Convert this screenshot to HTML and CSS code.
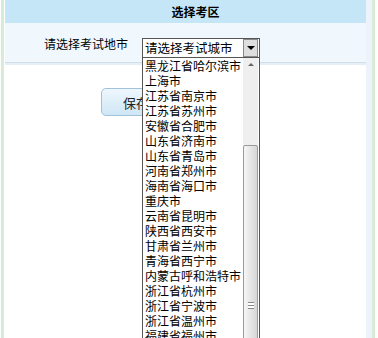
FILE: index.html
```html
<!DOCTYPE html>
<html lang="zh-CN">
<head>
    <meta charset="UTF-8">
    <title>选择考区</title>
    <link rel="stylesheet" href="styles.css">
</head>
<body>
    <div class="frame">
        <div class="main">
            <div class="title">选择考区</div>
            <div class="row">
                <span class="label">请选择考试地市</span>
                <div class="picker">
                    <div class="picker-box">
                        <span class="picker-text">请选择考试城市</span>
                        <span class="picker-btn"><span class="tri"></span></span>
                    </div>
                    <div class="dropdown">
                        <div class="options">
                            <div>黑龙江省哈尔滨市</div>
                            <div>上海市</div>
                            <div>江苏省南京市</div>
                            <div>江苏省苏州市</div>
                            <div>安徽省合肥市</div>
                            <div>山东省济南市</div>
                            <div>山东省青岛市</div>
                            <div>河南省郑州市</div>
                            <div>海南省海口市</div>
                            <div>重庆市</div>
                            <div>云南省昆明市</div>
                            <div>陕西省西安市</div>
                            <div>甘肃省兰州市</div>
                            <div>青海省西宁市</div>
                            <div>内蒙古呼和浩特市</div>
                            <div>浙江省杭州市</div>
                            <div>浙江省宁波市</div>
                            <div>浙江省温州市</div>
                            <div>福建省福州市</div>
                        </div>
                        <div class="scrollbar">
                            <div class="up"><span class="tri-up"></span></div>
                            <div class="thumb"><span class="grip"></span></div>
                        </div>
                    </div>
                </div>
            </div>
            <div class="actions">
                <button class="save-btn">保存</button>
            </div>
        </div>
        <div class="side"></div>
    </div>
</body>
</html>
```

FILE: styles.css
```css
body {
    margin: 0;
    background: #fff;
    font-family: "Noto Sans CJK SC", "Liberation Sans", sans-serif;
    font-size: 12px;
    color: #000;
}
.frame {
    display: flex;
    width: 374px;
    height: 338px;
    margin-left: 1px;
    border-left: 3px solid #d6ecd6;
    border-right: 3px solid #d6ecd6;
    box-sizing: border-box;
    overflow: hidden;
}
.main {
    width: 361px;
    margin-left: 1px;
}
.side {
    flex: 1;
    background: #eef2fa;
}
.title {
    height: 23px;
    line-height: 23px;
    background: #c4e6f6;
    font-weight: bold;
    text-align: center;
    padding-left: 20px;
}
.row {
    display: flex;
    align-items: center;
    height: 39px;
    background: #f1f8fd;
    border-bottom: 1px solid #cfe0ec;
    box-shadow: 0 2px 0 #e6eff6;
}
.label {
    width: 123px;
    text-align: right;
    padding-top: 2px;
}
.picker {
    position: relative;
    margin-left: 14px;
    margin-top: 9px;
    width: 118px;
    height: 19px;
}
.picker-box {
    display: flex;
    height: 19px;
    border: 1px solid #555;
    border-bottom: none;
    background: #fff;
    box-sizing: border-box;
}
.picker-text {
    flex: 1;
    padding-left: 2px;
    font-size: 12.5px;
    line-height: 18px;
}
.picker-btn {
    display: flex;
    align-items: center;
    justify-content: center;
    width: 13px;
    height: 16px;
    margin: 0 1px 0 0;
    background: #dedede;
    border: 1px solid #8a8a8a;
}
.tri {
    border-left: 4px solid transparent;
    border-right: 4px solid transparent;
    border-top: 4px solid #000;
}
.dropdown {
    position: absolute;
    left: 0;
    top: 19px;
    width: 118px;
    height: 300px;
    display: flex;
    border: 1px solid #555;
    box-sizing: border-box;
    background: #fff;
}
.options {
    flex: 1;
    padding-left: 2px;
    font-size: 12px;
    line-height: 15px;
    white-space: nowrap;
    overflow: hidden;
}
.scrollbar {
    width: 15px;
    margin-right: 1px;
    background: #efefef;
    display: flex;
    flex-direction: column;
}
.up {
    height: 14px;
    display: flex;
    justify-content: center;
    align-items: center;
}
.tri-up {
    border-left: 3px solid transparent;
    border-right: 3px solid transparent;
    border-bottom: 3px solid #666;
}
.thumb {
    margin-top: 73px;
    flex: 1;
    border: 1px solid #9a9a9a;
    border-radius: 2px;
    background: linear-gradient(to right, #f6f6f6, #d6d6d8);
    display: flex;
    justify-content: center;
    padding-top: 156px;
}
.grip {
    width: 6px;
    height: 5px;
    border-top: 1px solid #888;
    border-bottom: 1px solid #888;
    background: linear-gradient(#fff 0, #fff 2px, #888 2px, #888 3px, #fff 3px);
}
.actions {
    padding: 25px 0 0 96px;
}
.save-btn {
    width: 70px;
    height: 28px;
    border: 1px solid #9fc3dc;
    border-radius: 5px;
    background: linear-gradient(#eef7fd, #cfe6f5);
    font-family: "Noto Sans CJK SC", sans-serif;
    font-size: 13px;
    color: #222;
}
```
